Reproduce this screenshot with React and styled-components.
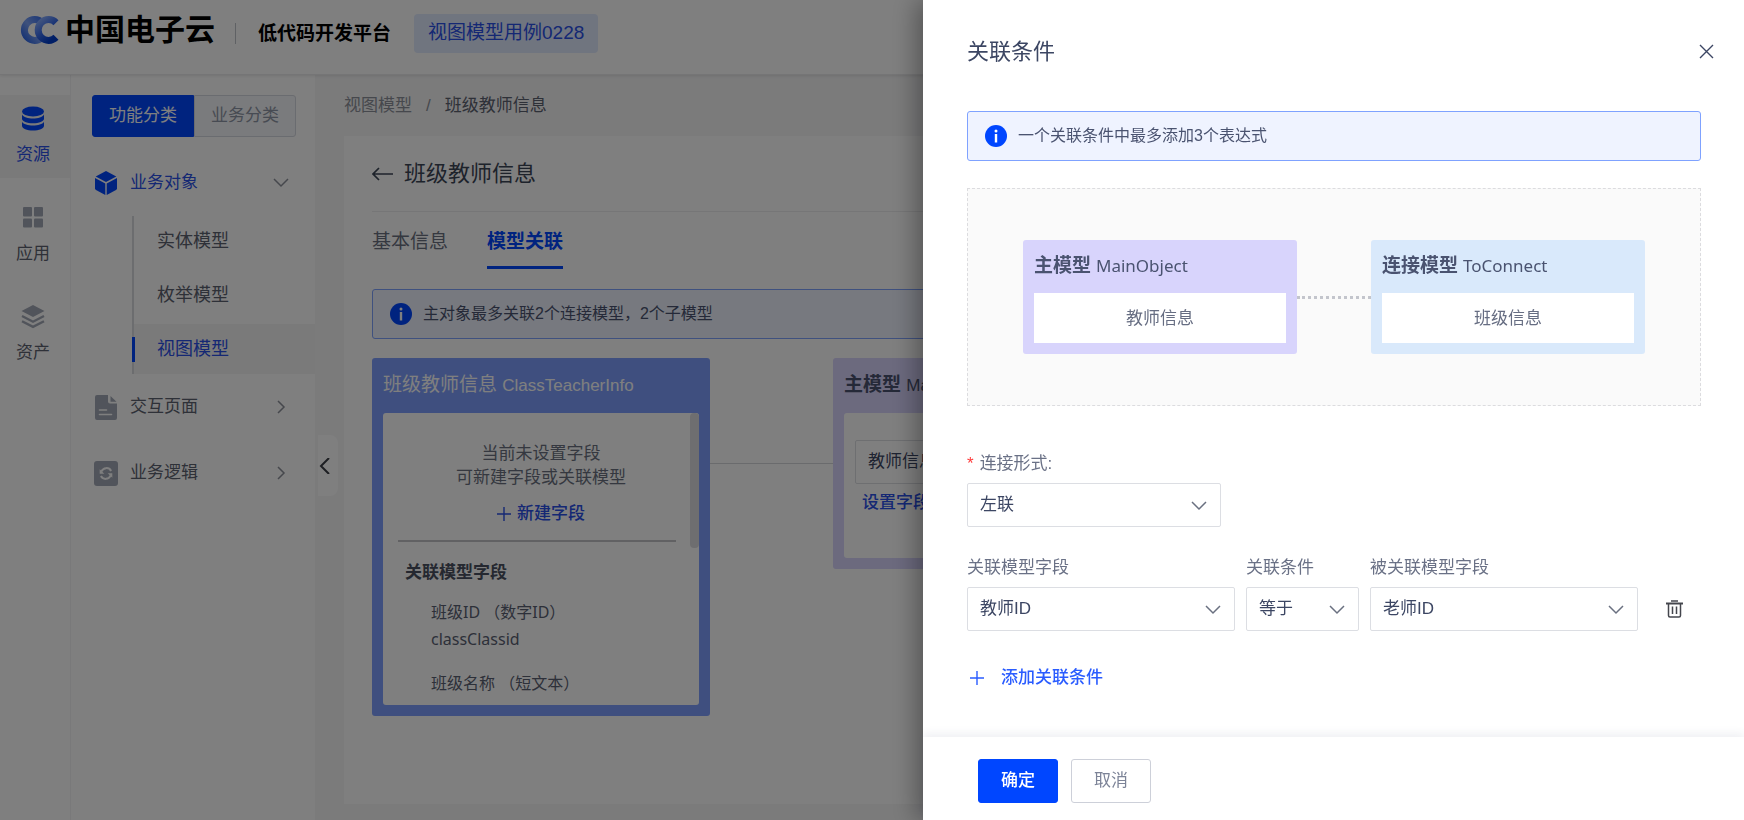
import React, { useState } from 'react';
import styled, { createGlobalStyle } from 'styled-components';

const BLUE = '#0046ff';

const GlobalStyle = createGlobalStyle`
  * {
    box-sizing: border-box;
  }

  body {
    margin: 0;
    background: #f6f6f7;
    color: #3c4663;
    font-family: 'Liberation Sans', 'Noto Sans CJK SC', sans-serif;
    font-size: 17px;
    line-height: 24px;
  }

  button, select {
    font: inherit;
    color: inherit;
  }

  button {
    padding: 0;
    border: 0;
    background: none;
    cursor: pointer;
  }

  a {
    color: inherit;
    text-decoration: none;
  }

  h1, h2, h3, p, ul {
    margin: 0;
    padding: 0;
    font-weight: 400;
  }

  ul {
    list-style: none;
  }

  svg {
    display: block;
    flex: none;
  }
`;

/* ---------- page shell ---------- */

const Page = styled.div`
  display: flex;
  flex-direction: column;
  height: 100vh;
  overflow: hidden;
`;

const Header = styled.header`
  position: relative;
  display: flex;
  align-items: center;
  padding: 14px 20px 21px;
  background: #fff;
  border-bottom: 1px solid #ebebed;
  box-shadow: 0 1px 3px rgba(0, 0, 0, 0.1);
`;

const Brand = styled.a`
  display: flex;
  align-items: center;
  gap: 6px;
  padding-bottom: 7px;
  color: #000;
  font-size: 30px;
  line-height: 32px;
  font-weight: 700;
`;

const HeaderLine = styled.span`
  width: 1px;
  height: 21px;
  margin: 0 22px 0 20px;
  background: #bfc2c8;
`;

const ProductName = styled.span`
  color: #000;
  font-size: 19px;
  font-weight: 700;
`;

const AppTag = styled.span`
  margin-left: 23px;
  padding: 7px 14px 8px;
  border-radius: 4px;
  background: #e0eaff;
  color: #2a50e8;
  font-size: 19px;
`;

const Body = styled.div`
  display: flex;
  flex: 1;
  min-height: 0;
`;

const Rail = styled.nav`
  display: flex;
  flex-direction: column;
  gap: 16px;
  width: 71px;
  padding-top: 20px;
  background: #fff;
  border-right: 1px solid #f2f2f4;
`;

const RailItem = styled.a`
  display: flex;
  flex-direction: column;
  align-items: center;
  gap: 12px;
  padding: 11px 4px 11px 0;
  background: ${({ $active }) => ($active ? '#f4f4f5' : 'transparent')};
  color: ${({ $active }) => ($active ? '#2a50e8' : '#5c6270')};

  svg {
    color: ${({ $active }) => ($active ? BLUE : '#a3a9b6')};
  }
`;

/* ---------- sidebar ---------- */

const Sidebar = styled.aside`
  width: 244px;
  padding-top: 20px;
  background: #fff;
`;

const Switch = styled.div`
  display: flex;
  margin: 0 19px 13px 21px;
`;

const SwitchButton = styled.button`
  flex: 1;
  height: 42px;
  border: 1px solid ${({ $active }) => ($active ? BLUE : '#d4d8e0')};
  border-radius: ${({ $active }) => ($active ? '3px 0 0 3px' : '0 3px 3px 0')};
  background: ${({ $active }) => ($active ? BLUE : '#f5f7fa')};
  color: ${({ $active }) => ($active ? '#fff' : '#8f96a6')};
`;

const MenuGroup = styled.button`
  display: flex;
  align-items: center;
  width: 100%;
  height: 66px;
  padding: 0 26px 0 23px;
  color: ${({ $active }) => ($active ? '#2a50e8' : '#5c6270')};
  text-align: left;

  svg:first-child {
    color: ${({ $active }) => ($active ? BLUE : '#a3a9b6')};
  }

  svg:last-child {
    color: #8d919a;
  }

  span {
    flex: 1;
    padding-left: 12px;
  }
`;

const SubMenu = styled.ul`
  display: flex;
  flex-direction: column;
  gap: 4px;
  margin-left: 61px;
  border-left: 2px solid #d9dade;
`;

const SubItem = styled.a`
  position: relative;
  display: block;
  padding: 13px 23px;
  font-size: 18px;
  background: ${({ $active }) => ($active ? '#f4f4f5' : 'transparent')};
  color: ${({ $active }) => ($active ? '#2a50e8' : '#5c6270')};

  &::before {
    content: '';
    position: absolute;
    left: -2px;
    top: 13px;
    width: 3px;
    height: 25px;
    background: ${({ $active }) => ($active ? BLUE : 'transparent')};
  }
`;

const Fold = styled.button`
  align-self: flex-start;
  display: flex;
  align-items: center;
  justify-content: center;
  width: 20px;
  height: 61px;
  margin: 360px 6px 0 3px;
  padding-right: 4px;
  border-radius: 0 8px 8px 0;
  background: #fff;
  color: #3a3d45;
`;

/* ---------- content ---------- */

const Main = styled.main`
  display: flex;
  flex-direction: column;
  flex: 1;
  min-width: 0;
  padding: 19px 20px 16px 0;
`;

const Crumbs = styled.nav`
  display: flex;
  gap: 14px;
  margin-bottom: 18px;
  color: #8d919a;

  span:last-child {
    color: #5c6270;
  }
`;

const Sheet = styled.section`
  flex: 1;
  padding: 0 28px;
  background: #fff;
`;

const SheetTitle = styled.div`
  display: flex;
  align-items: center;
  gap: 10px;
  height: 76px;
  border-bottom: 1px solid #ececee;
  color: #3c4657;

  h1 {
    font-size: 22px;
    line-height: 32px;
  }
`;

const Tabs = styled.div`
  display: flex;
  gap: 39px;
  padding-top: 18px;
`;

const Tab = styled.button`
  padding: 0 0 12px;
  border-bottom: 3px solid ${({ $active }) => ($active ? BLUE : 'transparent')};
  color: ${({ $active }) => ($active ? BLUE : '#6a7080')};
  font-size: 19px;
  font-weight: ${({ $active }) => ($active ? 700 : 400)};
`;

const Alert = styled.div`
  display: flex;
  align-items: center;
  gap: 11px;
  height: 50px;
  padding: 0 17px;
  border: 1px solid #7fa2ff;
  border-radius: 3px;
  background: #eff3ff;
  color: #4a5370;
  font-size: 16px;
`;

const SheetAlert = styled(Alert)`
  margin: 20px 0 19px;
`;

const Canvas = styled.div`
  display: flex;
  align-items: flex-start;
`;

const Link = styled.div`
  width: 123px;
  margin-top: 105px;
  border-top: 1px solid #d5d6da;
`;

const CARD_COLORS = { blue: '#7f9fff', purple: '#d8d4fc', sky: '#d9e9fb' };

const Card = styled.section`
  width: ${({ $wide }) => ($wide ? 338 : 274)}px;
  padding: 0 11px 11px;
  border-radius: 3px;
  background: ${({ $color }) => CARD_COLORS[$color]};
`;

const CardTitle = styled.h2`
  padding: 15px 0;
  color: ${({ $light }) => ($light ? '#fff' : '#4a5370')};
  font-size: 19px;

  b {
    font-weight: 700;
  }

  span {
    font-size: 17px;
  }
`;

const FieldPanel = styled.div`
  position: relative;
  height: 292px;
  padding: 29px 0;
  overflow: hidden;
  border-radius: 3px;
  background: #fff;
  color: #6a7080;
`;

const ScrollThumb = styled.div`
  position: absolute;
  top: 0;
  right: 0;
  width: 9px;
  height: 135px;
  border-radius: 4px;
  background: #dddde0;
`;

const EmptyHint = styled.p`
  text-align: center;
`;

const NewField = styled.button`
  display: flex;
  align-items: center;
  gap: 6px;
  margin: 12px auto 14px;
  color: #2a50e8;
  font-weight: 500;
`;

const LinkedFields = styled.div`
  margin: 0 23px 0 15px;
  border-top: 2px solid #c2c3c7;
  color: #5a6172;

  h3 {
    padding: 19px 7px 14px;
    color: #4a5161;
    font-size: 17px;
    font-weight: 700;
  }
`;

const FieldRow = styled.p`
  padding-left: 33px;
  margin-bottom: 17px;
  font-family: 'Noto Sans', 'Noto Sans CJK SC', sans-serif;
  font-size: 16px;
  line-height: 27px;
`;

const ModelPanel = styled.div`
  height: 145px;
  padding: 27px 11px;
  border-radius: 3px;
  background: #fff;
`;

const TextButton = styled.button`
  padding: 7px;
  color: #2a50e8;
  font-weight: 500;
`;

/* ---------- select ---------- */

const SelectBox = styled.div`
  position: relative;
  color: #3c4663;

  select {
    display: block;
    width: 100%;
    height: 44px;
    padding: 0 36px 0 12px;
    appearance: none;
    border: 1px solid #dcdee3;
    border-radius: 2px;
    background: #fff;
    outline: none;
  }

  svg {
    position: absolute;
    top: 15px;
    right: 14px;
    color: #6a7080;
    pointer-events: none;
  }
`;

/* ---------- drawer ---------- */

const Mask = styled.div`
  position: fixed;
  inset: 0;
  background: rgba(0, 0, 0, 0.5);
`;

const Drawer = styled.section`
  position: fixed;
  top: 0;
  right: 0;
  bottom: 0;
  display: flex;
  flex-direction: column;
  width: 821px;
  max-width: 100%;
  background: #fff;
  box-shadow: -6px 0 24px rgba(0, 0, 0, 0.35);
`;

const DrawerHeader = styled.header`
  display: flex;
  align-items: center;
  justify-content: space-between;
  height: 103px;
  padding: 0 30px 0 44px;

  h2 {
    font-size: 22px;
    line-height: 32px;
  }
`;

const DrawerBody = styled.div`
  flex: 1;
  overflow: auto;
  padding: 8px 43px 0 44px;
`;

const Preview = styled.div`
  display: flex;
  align-items: center;
  justify-content: center;
  margin: 27px 0 46px;
  padding: 51px 0;
  border: 1px dashed #dcdcdf;
  background: #fafafa;
`;

const PreviewCard = styled(Card)`
  font-family: 'Noto Sans', 'Noto Sans CJK SC', sans-serif;

  ${CardTitle} {
    padding: 13px 0 15px;
  }
`;

const PreviewName = styled.div`
  padding: 13px 0;
  background: #fff;
  text-align: center;
  color: #666d82;
`;

const DottedLink = styled.div`
  width: 74px;
  border-top: 3px dotted #c3c5cc;
`;

const Field = styled.div`
  width: ${({ $width }) => $width}px;

  label {
    display: block;
    margin-bottom: 7px;
    color: #6a7186;
  }
`;

const Required = styled.span`
  margin-right: 6px;
  color: #ff3b3b;
`;

const ConditionRow = styled.div`
  display: flex;
  align-items: flex-end;
  gap: 11px;
  margin-top: 29px;
`;

const DeleteButton = styled.button`
  display: flex;
  align-items: center;
  height: 44px;
  margin-left: 17px;
  color: #44464d;
`;

const AddButton = styled.button`
  display: flex;
  align-items: center;
  gap: 17px;
  margin: 35px 0 20px 3px;
  color: #2a5cff;
  font-weight: 500;
`;

const DrawerFooter = styled.footer`
  display: flex;
  gap: 13px;
  padding: 22px 55px 17px;
  box-shadow: 0 -4px 8px rgba(40, 60, 100, 0.07);
`;

const ActionButton = styled.button`
  width: 80px;
  height: 44px;
  border: 1px solid ${({ $primary }) => ($primary ? BLUE : '#cdd0d9')};
  border-radius: 3px;
  background: ${({ $primary }) => ($primary ? BLUE : '#fff')};
  color: ${({ $primary }) => ($primary ? '#fff' : '#7c8397')};
  font-weight: ${({ $primary }) => ($primary ? 500 : 400)};
`;

/* ---------- icons ---------- */

const Logo = () => (
  <svg width="39" height="28" viewBox="0 0 39 28" fill="none" strokeWidth="7">
    <defs>
      <linearGradient id="logoBack" x1="0" y1="1" x2="1" y2="0">
        <stop offset="0" stopColor="#2c66e8" />
        <stop offset="0.5" stopColor="#7ea4f8" />
        <stop offset="1" stopColor="#3f74f0" />
      </linearGradient>
      <linearGradient id="logoFront" x1="0" y1="0" x2="0.7" y2="1">
        <stop offset="0" stopColor="#8fb2ff" />
        <stop offset="0.5" stopColor="#3d70ee" />
        <stop offset="1" stopColor="#003ccc" />
      </linearGradient>
    </defs>
    <path d="M22 6.500A10.400 10.400 0 1 0 22 21.500" stroke="url(#logoBack)" />
    <path d="M36 6.700A10.400 10.400 0 1 0 36 21.300" stroke="url(#logoFront)" />
  </svg>
);

const DatabaseIcon = () => (
  <svg width="24" height="25" viewBox="0 0 24 25" fill="currentColor">
    <ellipse cx="12" cy="5.500" rx="11" ry="5" />
    <path d="M1 8.500c1.500 2.800 6 4 11 4s9.500-1.200 11-4v4.200c0 2.600-5 4.600-11 4.600S1 15.300 1 12.700z" />
    <path d="M1 15.700c1.500 2.500 6 3.700 11 3.700s9.500-1.200 11-3.700v4c0 2.800-5 4.800-11 4.800S1 22.500 1 19.700z" />
  </svg>
);

const GridIcon = () => (
  <svg width="24" height="25" viewBox="0 0 24 25" fill="currentColor">
    <rect x="2" y="2" width="9" height="9.500" rx="1" />
    <rect x="13" y="2" width="9" height="9.500" rx="1" />
    <rect x="2" y="13.500" width="9" height="9" rx="1" />
    <rect x="13" y="13.500" width="9" height="9" rx="1" />
  </svg>
);

const LayersIcon = () => (
  <svg width="24" height="25" viewBox="0 0 24 25">
    <path d="M12 1l11.500 6L12 13 .5 7z" fill="currentColor" />
    <path d="M1 12l11 5.700L23 12M1 17.200l11 5.700 11-5.700" fill="none" stroke="currentColor" strokeWidth="2.400" />
  </svg>
);

const CubeIcon = () => (
  <svg width="24" height="24" viewBox="0 0 24 24" fill="currentColor">
    <path d="M12 0l10.300 5.400L12 11 1.700 5.400z" />
    <path d="M1 7l10.300 5.600V24L2 19a2 2 0 0 1-1-1.700z" />
    <path d="M23 7l-10.300 5.600V24L22 19a2 2 0 0 0 1-1.700z" />
  </svg>
);

const PageIcon = () => (
  <svg width="24" height="25" viewBox="0 0 24 25">
    <path d="M3 0h11v6.500a2 2 0 0 0 2 2h7V23a2 2 0 0 1-2 2H3a2 2 0 0 1-2-2V2a2 2 0 0 1 2-2z" fill="currentColor" />
    <path d="M16.500 1l6 5.700h-6z" fill="currentColor" />
    <path d="M5.500 15h7M5.500 19.500h12" stroke="#fff" strokeWidth="1.600" strokeLinecap="round" />
  </svg>
);

const LogicIcon = () => (
  <svg width="24" height="25" viewBox="0 0 24 25">
    <rect width="24" height="25" rx="3" fill="currentColor" />
    <path d="M7.500 10.500a5.300 5.300 0 0 1 9.600-.6M16.500 14.500a5.300 5.300 0 0 1-9.600.6" fill="none" stroke="#fff" strokeWidth="2" />
    <path d="M5.700 8.200v4.600h4.600zM18.300 16.800v-4.600h-4.600z" fill="#fff" />
  </svg>
);

const InfoIcon = () => (
  <svg width="22" height="22" viewBox="0 0 22 22">
    <circle cx="11" cy="11" r="11" fill={BLUE} />
    <rect x="9.800" y="9" width="2.400" height="8.500" fill="#fff" />
    <circle cx="11" cy="6" r="1.500" fill="#fff" />
  </svg>
);

// direction is the way the tip points
const CHEVRONS = {
  down: 'M1 4l7 7 7-7',
  right: 'M5 2l6 6-6 6',
  left: 'M11 0L3 8l8 8',
};

const Chevron = ({ direction = 'down', strokeWidth = 1.5 }) => (
  <svg width="16" height="16" viewBox="0 0 16 16" fill="none" stroke="currentColor" strokeWidth={strokeWidth}>
    <path d={CHEVRONS[direction]} />
  </svg>
);

const ArrowLeft = () => (
  <svg width="22" height="16" viewBox="0 0 22 16" fill="none" stroke="currentColor" strokeWidth="1.700">
    <path d="M21 8H1M7 2L1 8l6 6" />
  </svg>
);

const PlusIcon = ({ size = 14 }) => (
  <svg width={size} height={size} viewBox="0 0 14 14" stroke="currentColor" strokeWidth="1.400">
    <path d="M7 0v14M0 7h14" />
  </svg>
);

const CloseIcon = () => (
  <svg width="15" height="15" viewBox="0 0 15 15" stroke="currentColor" strokeWidth="1.400">
    <path d="M1 1l13 13M14 1L1 14" />
  </svg>
);

const TrashIcon = () => (
  <svg width="17" height="18" viewBox="0 0 17 18" fill="none" stroke="currentColor" strokeWidth="1.500">
    <path d="M0 3.500h17" strokeWidth="2" />
    <path d="M5 1h7M2.500 4v11.500a1.500 1.500 0 0 0 1.500 1.500h9a1.500 1.500 0 0 0 1.500-1.500V4M6.500 6.500v7.500M10.500 6.500v7.500" />
  </svg>
);

/* ---------- components ---------- */

const Select = ({ id, options, label }) => {
  const [value, setValue] = useState(options[0]);

  return (
    <SelectBox>
      <select id={id} aria-label={label} value={value} onChange={(e) => setValue(e.target.value)}>
        {options.map((option) => (
          <option key={option}>{option}</option>
        ))}
      </select>
      <Chevron />
    </SelectBox>
  );
};

const railItems = [
  { label: '资源', Icon: DatabaseIcon },
  { label: '应用', Icon: GridIcon },
  { label: '资产', Icon: LayersIcon },
];

const subItems = ['实体模型', '枚举模型', '视图模型'];

const categories = ['功能分类', '业务分类'];

const conditionFields = [
  { id: 'source-field', label: '关联模型字段', width: 268, options: ['教师ID'] },
  { id: 'operator', label: '关联条件', width: 113, options: ['等于'] },
  { id: 'target-field', label: '被关联模型字段', width: 268, options: ['老师ID'] },
];

const SideMenu = () => (
  <Sidebar>
    <Switch>
      {categories.map((name, index) => (
        <SwitchButton key={name} $active={index === 0}>{name}</SwitchButton>
      ))}
    </Switch>
    <div>
      <MenuGroup $active>
        <CubeIcon />
        <span>业务对象</span>
        <Chevron />
      </MenuGroup>
      <SubMenu>
        {subItems.map((name) => (
          <li key={name}>
            <SubItem href="#" $active={name === '视图模型'}>{name}</SubItem>
          </li>
        ))}
      </SubMenu>
      <MenuGroup>
        <PageIcon />
        <span>交互页面</span>
        <Chevron direction="right" />
      </MenuGroup>
      <MenuGroup>
        <LogicIcon />
        <span>业务逻辑</span>
        <Chevron direction="right" />
      </MenuGroup>
    </div>
  </Sidebar>
);

const ModelCanvas = () => (
  <Canvas>
    <Card $color="blue" $wide>
      <CardTitle $light>
        班级教师信息 <span>ClassTeacherInfo</span>
      </CardTitle>
      <FieldPanel>
        <EmptyHint>
          当前未设置字段
          <br />
          可新建字段或关联模型
        </EmptyHint>
        <NewField>
          <PlusIcon />
          新建字段
        </NewField>
        <LinkedFields>
          <h3>关联模型字段</h3>
          <FieldRow>
            班级ID （数字ID）
            <br />
            classClassid
          </FieldRow>
          <FieldRow>班级名称 （短文本）</FieldRow>
        </LinkedFields>
        <ScrollThumb />
      </FieldPanel>
    </Card>
    <Link />
    <Card $color="purple" $wide>
      <CardTitle>
        <b>主模型</b> <span>MainObject</span>
      </CardTitle>
      <ModelPanel>
        <Select label="主模型" options={['教师信息']} />
        <TextButton>设置字段</TextButton>
      </ModelPanel>
    </Card>
  </Canvas>
);

const ConditionDrawer = () => (
  <Drawer role="dialog" aria-labelledby="drawer-title">
    <DrawerHeader>
      <h2 id="drawer-title">关联条件</h2>
      <button aria-label="关闭">
        <CloseIcon />
      </button>
    </DrawerHeader>
    <DrawerBody>
      <Alert>
        <InfoIcon />
        一个关联条件中最多添加3个表达式
      </Alert>
      <Preview>
        <PreviewCard $color="purple">
          <CardTitle>
            <b>主模型</b> <span>MainObject</span>
          </CardTitle>
          <PreviewName>教师信息</PreviewName>
        </PreviewCard>
        <DottedLink />
        <PreviewCard $color="sky">
          <CardTitle>
            <b>连接模型</b> <span>ToConnect</span>
          </CardTitle>
          <PreviewName>班级信息</PreviewName>
        </PreviewCard>
      </Preview>
      <Field $width={254}>
        <label htmlFor="join-type">
          <Required>*</Required>
          连接形式:
        </label>
        <Select id="join-type" options={['左联']} />
      </Field>
      <ConditionRow>
        {conditionFields.map(({ id, label, width, options }) => (
          <Field key={id} $width={width}>
            <label htmlFor={id}>{label}</label>
            <Select id={id} options={options} />
          </Field>
        ))}
        <DeleteButton aria-label="删除">
          <TrashIcon />
        </DeleteButton>
      </ConditionRow>
      <AddButton>
        <PlusIcon />
        添加关联条件
      </AddButton>
    </DrawerBody>
    <DrawerFooter>
      <ActionButton $primary>确定</ActionButton>
      <ActionButton>取消</ActionButton>
    </DrawerFooter>
  </Drawer>
);

const App = () => {
  const [tab, setTab] = useState('模型关联');

  return (
    <>
      <GlobalStyle />
      <Page>
        <Header>
          <Brand href="#">
            <Logo />
            中国电子云
          </Brand>
          <HeaderLine />
          <ProductName>低代码开发平台</ProductName>
          <AppTag>视图模型用例0228</AppTag>
        </Header>
        <Body>
          <Rail>
            {railItems.map(({ label, Icon }, index) => (
              <RailItem key={label} href="#" $active={index === 0}>
                <Icon />
                {label}
              </RailItem>
            ))}
          </Rail>
          <SideMenu />
          <Fold aria-label="收起">
            <Chevron direction="left" strokeWidth={2} />
          </Fold>
          <Main>
            <Crumbs>
              <a href="#">视图模型</a>
              <span>/</span>
              <span>班级教师信息</span>
            </Crumbs>
            <Sheet>
              <SheetTitle>
                <button aria-label="返回">
                  <ArrowLeft />
                </button>
                <h1>班级教师信息</h1>
              </SheetTitle>
              <Tabs>
                {['基本信息', '模型关联'].map((name) => (
                  <Tab key={name} $active={name === tab} onClick={() => setTab(name)}>{name}</Tab>
                ))}
              </Tabs>
              <SheetAlert>
                <InfoIcon />
                主对象最多关联2个连接模型，2个子模型
              </SheetAlert>
              <ModelCanvas />
            </Sheet>
          </Main>
        </Body>
      </Page>
      <Mask />
      <ConditionDrawer />
    </>
  );
};

export default App;
